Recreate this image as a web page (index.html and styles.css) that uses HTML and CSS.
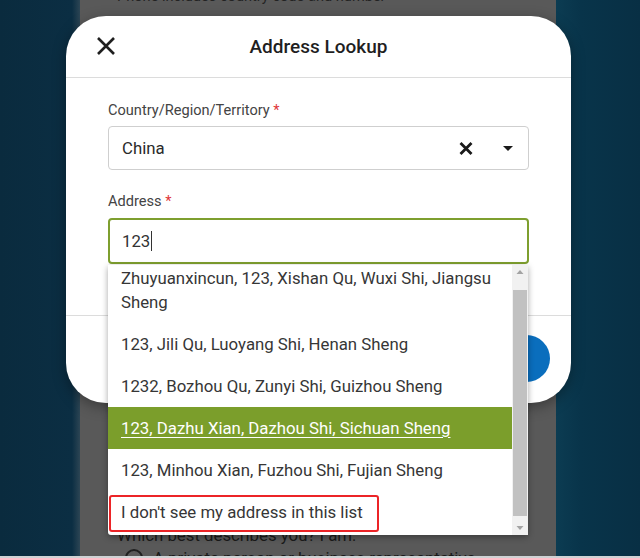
FILE: index.html
```html
<!DOCTYPE html>
<html lang="en">
<head>
<meta charset="utf-8">
<title>Address Lookup</title>
<link rel="stylesheet" href="styles.css">
</head>
<body>
<div class="page">
  <div class="side side-left"></div>
  <div class="panel">
    <p class="panel-top">Phone includes country code and number</p>
    <div class="panel-spacer"></div>
    <div class="panel-bottom">
      <p class="panel-q">Which best describes you? I am:</p>
      <div class="panel-radio"><span class="radio"></span><span class="radio-text">A private person or business representative</span></div>
    </div>
  </div>
  <div class="side side-right"></div>
</div>
<div class="bottom-line"></div>

<div class="modal">
  <div class="modal-header">
    <button class="close-btn" aria-label="Close">
      <svg width="20" height="20" viewBox="0 0 20 20"><path d="M2 2 L18 18 M18 2 L2 18" stroke="#1f1f1f" stroke-width="2.6" fill="none"/></svg>
    </button>
    <h1 class="modal-title">Address Lookup</h1>
  </div>
  <div class="modal-body">
    <label class="field-label">Country/Region/Territory <span class="req">*</span></label>
    <div class="select">
      <span class="select-value">China</span>
      <svg class="clear-icon" width="14" height="13" viewBox="0 0 14 13"><path d="M1.5 1 L12.5 12 M12.5 1 L1.5 12" stroke="#1a1a1a" stroke-width="2.8" fill="none"/></svg>
      <svg class="caret-icon" width="10" height="5" viewBox="0 0 10 5"><path d="M0 0 H10 L5 5 Z" fill="#1a1a1a"/></svg>
    </div>
    <label class="field-label field-label-2">Address <span class="req">*</span></label>
    <div class="input"><span class="input-value">123</span><span class="caret-line"></span></div>
  </div>
  <div class="modal-footer">
    <button class="round-btn" aria-label="Next"></button>
  </div>

  <div class="dropdown">
    <ul class="options">
      <li class="option">Zhuyuanxincun, 123, Xishan Qu, Wuxi Shi, Jiangsu Sheng</li>
      <li class="option">123, Jili Qu, Luoyang Shi, Henan Sheng</li>
      <li class="option">1232, Bozhou Qu, Zunyi Shi, Guizhou Sheng</li>
      <li class="option option-active">123, Dazhu Xian, Dazhou Shi, Sichuan Sheng</li>
      <li class="option">123, Minhou Xian, Fuzhou Shi, Fujian Sheng</li>
      <li class="option option-marked">I don't see my address in this list</li>
    </ul>
    <div class="scrollbar">
      <svg class="sb-arrow" width="16" height="14" viewBox="0 0 16 14"><path d="M4.5 9 H11.5 L8 5 Z" fill="#a3a3a3"/></svg>
      <div class="sb-track"><div class="sb-thumb"></div></div>
      <svg class="sb-arrow" width="16" height="14" viewBox="0 0 16 14"><path d="M4.5 5 H11.5 L8 9 Z" fill="#a3a3a3"/></svg>
    </div>
  </div>
</div>
</body>
</html>
```

FILE: styles.css
```css
* { box-sizing: border-box; }

html, body {
  margin: 0;
  padding: 0;
}

body {
  width: 640px;
  height: 558px;
  overflow: hidden;
  position: relative;
  font-family: Roboto, "Liberation Sans", Arial, sans-serif;
  background: #0a2d41;
}

.page {
  display: flex;
  height: 556px;
}

.side-left {
  width: 80px;
  background: linear-gradient(90deg, #0a2b3e 0%, #0b2e43 90%, #2c4554 100%);
}

.side-right {
  flex: 1;
  background: linear-gradient(90deg, #0c3c52 0%, #08344a 30%, #082f44 100%);
}

.panel {
  width: 476px;
  background: #595959;
  display: flex;
  flex-direction: column;
  padding-left: 37px;
  color: #1e1e1e;
  overflow: hidden;
}

.panel-top {
  margin: -12px 0 0;
  font-size: 14.6px;
  line-height: 16px;
  color: #232323;
}

.panel-spacer { flex: 1; }

.panel-bottom {
  height: 31px;
}

.panel-q {
  margin: 0;
  font-size: 16.8px;
  line-height: 20px;
  color: #1a1a1a;
}

.panel-radio {
  display: flex;
  align-items: center;
  gap: 10px;
  margin-top: 3px;
  padding-left: 8px;
  font-size: 16.8px;
  color: #1a1a1a;
}

.radio {
  width: 18px;
  height: 18px;
  border: 2px solid #1f1f1f;
  border-radius: 50%;
  flex: none;
}

.bottom-line {
  height: 2px;
  background: #cfd2d4;
}

/* Modal */
.modal {
  position: absolute;
  left: 66px;
  top: 16px;
  width: 505px;
  height: 387px;
  background: #fff;
  border-radius: 40px;
  box-shadow: 0 4px 14px rgba(0, 0, 0, 0.35);
  display: flex;
  flex-direction: column;
}

.modal-header {
  height: 62px;
  border-bottom: 1px solid #dcdcdc;
  display: flex;
  align-items: center;
  justify-content: center;
  position: relative;
  flex: none;
}

.close-btn {
  position: absolute;
  left: 29px;
  top: 19px;
  width: 22px;
  height: 22px;
  padding: 0;
  border: 0;
  background: none;
  display: flex;
  align-items: center;
  justify-content: center;
}

.modal-title {
  margin: 0;
  font-size: 19px;
  font-weight: 500;
  color: #1f1f1f;
  line-height: 24px;
}

.modal-body {
  padding: 24px 42px 51px;
  display: flex;
  flex-direction: column;
  flex: none;
}

.field-label {
  font-size: 14.6px;
  line-height: 16px;
  color: #444;
}

.field-label-2 {
  margin-top: 23px;
}

.req { color: #e0363a; }

.select {
  margin-top: 8px;
  height: 44px;
  border: 1px solid #cfcfcf;
  border-radius: 4px;
  display: flex;
  align-items: center;
  padding: 0 15px 0 13px;
}

.select-value {
  flex: 1;
  font-size: 16.8px;
  color: #2a2a2a;
}

.clear-icon { margin-right: 30px; }

.input {
  margin-top: 9px;
  height: 46px;
  border: 2px solid #7e9f2f;
  border-radius: 4px;
  display: flex;
  align-items: center;
  padding: 0 12px;
  font-size: 16.8px;
  color: #333;
}

.caret-line {
  width: 1px;
  height: 20px;
  background: #333;
  margin-left: 1px;
}

.modal-footer {
  flex: 1;
  border-top: 1px solid #dcdcdc;
  display: flex;
  justify-content: flex-end;
  align-items: flex-start;
  padding: 19px 21px 0 0;
}

.round-btn {
  width: 47px;
  height: 47px;
  border-radius: 50%;
  border: 0;
  background: #0a6ebd;
  padding: 0;
}

/* Dropdown */
.dropdown {
  position: absolute;
  left: 42px;
  top: 249px;
  width: 420px;
  height: 270px;
  background: #fff;
  box-shadow: 0 2px 6px rgba(0, 0, 0, 0.35);
  display: flex;
  border-radius: 0 0 3px 3px;
}

.options {
  list-style: none;
  margin: 0;
  padding: 0;
  flex: 1;
  overflow: hidden;
}

.option {
  padding: 9px 13px;
  font-size: 16.8px;
  line-height: 24px;
  color: #363636;
  position: relative;
}

.option:first-child {
  margin-top: -8px;
  padding-right: 8px;
}

.option-active {
  background: #7b9e2b;
  color: #fff;
  text-decoration: underline;
  text-underline-offset: 3px;
}

.option-marked::after {
  content: "";
  position: absolute;
  left: 1px;
  top: 4px;
  width: 266px;
  height: 33px;
  border: 2px solid #ec2427;
  border-radius: 3px;
}

.scrollbar {
  width: 16px;
  background: #f1f1f1;
  display: flex;
  flex-direction: column;
  flex: none;
}

.sb-arrow { flex: none; display: block; }

.sb-track {
  flex: 1;
  padding: 11px 1px 5px;
  display: flex;
}

.sb-thumb {
  flex: 1;
  background: #c1c1c1;
}
```
